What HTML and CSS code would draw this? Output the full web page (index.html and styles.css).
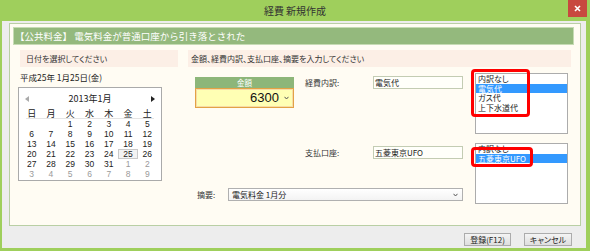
FILE: index.html
```html
<!DOCTYPE html>
<html lang="ja">
<head>
<meta charset="utf-8">
<title>経費 新規作成</title>
<link rel="stylesheet" href="styles.css">
</head>
<body>
<div class="window">
  <div class="titlebar">
    <span></span>
    <span class="title">経費 新規作成</span>
    <span class="close"><svg width="7" height="7" viewBox="0 0 7 7"><path d="M1 1L6 6M6 1L1 6" stroke="#fff" stroke-width="1.6"/></svg></span>
  </div>
  <div class="client">
    <div class="panel">
      <div class="band">【公共料金】 電気料金が普通口座から引き落とされた</div>
      <div class="cols">
        <div class="lcol">
          <div class="sechead">日付を選択してください</div>
          <div class="datelabel">平成25年 1月25日(金)</div>
          <div class="cal">
            <div class="calhead">
              <svg class="arr" width="4" height="6" viewBox="0 0 4 6"><path d="M4 0L0 3L4 6Z" fill="#aaa"/></svg>
              <span>2013年1月</span>
              <svg class="arr" width="4" height="6" viewBox="0 0 4 6"><path d="M0 0L4 3L0 6Z" fill="#222"/></svg>
            </div>
            <div class="dow"><span>日</span><span>月</span><span>火</span><span>水</span><span>木</span><span>金</span><span>土</span></div>
            <div class="days">
              <span></span><span></span><span>1</span><span>2</span><span>3</span><span>4</span><span>5</span>
              <span>6</span><span>7</span><span>8</span><span>9</span><span>10</span><span>11</span><span>12</span>
              <span>13</span><span>14</span><span>15</span><span>16</span><span>17</span><span>18</span><span>19</span>
              <span>20</span><span>21</span><span>22</span><span>23</span><span>24</span><span class="today">25</span><span>26</span>
              <span>27</span><span>28</span><span>29</span><span>30</span><span>31</span><span class="other">1</span><span class="other">2</span>
              <span class="other">3</span><span class="other">4</span><span class="other">5</span><span class="other">6</span><span class="other">7</span><span class="other">8</span><span class="other">9</span>
            </div>
          </div>
        </div>
        <div class="rcol">
          <div class="sechead">金額、経費内訳、支払口座、摘要を入力してください</div>
          <div class="rbody">
            <div class="amount">
              <div class="amthead">金額</div>
              <div class="amtinput"><span class="amtval">6300</span><svg width="5" height="4" viewBox="0 0 5 4"><path d="M0.5 0.8L2.5 3L4.5 0.8" fill="none" stroke="#555" stroke-width="1"/></svg></div>
            </div>
            <div class="label l1">経費内訳:</div>
            <div class="field f1">電気代</div>
            <div class="listbox lb1">
              <div class="item">内訳なし</div>
              <div class="item sel">電気代</div>
              <div class="item">ガス代</div>
              <div class="item">上下水道代</div>
              <div class="hl hl1"></div>
            </div>
            <div class="label l2">支払口座:</div>
            <div class="field f2">五菱東京UFO</div>
            <div class="memo">
              <span class="memolabel">摘要:</span>
              <div class="select"><span>電気料金 1月分</span><svg width="5" height="4" viewBox="0 0 5 4"><path d="M0.5 0.8L2.5 3L4.5 0.8" fill="none" stroke="#555" stroke-width="1"/></svg></div>
            </div>
            <div class="listbox lb2">
              <div class="item">内訳なし</div>
              <div class="item sel">五菱東京UFO</div>
              <div class="hl hl2"></div>
            </div>
          </div>
        </div>
      </div>
    </div>
    <div class="footer">
      <button class="btn b1">登録(F12)</button>
      <button class="btn b2">キャンセル</button>
    </div>
  </div>
</div>
</body>
</html>
```
FILE: styles.css
```css
* { box-sizing: border-box; }
html, body { margin: 0; padding: 0; }
body {
  width: 590px;
  height: 251px;
  overflow: hidden;
  background: #9fcf5c;
  font-family: "Noto Sans CJK JP", "Liberation Sans", sans-serif;
  font-size: 8px;
  font-feature-settings: "palt";
  color: #222;
}
.window { display: flex; flex-direction: column; height: 251px; }
.titlebar {
  height: 21px;
  display: grid;
  grid-template-columns: 1fr auto 1fr;
  align-items: start;
}
.title { font-size: 10px; line-height: 21px; color: #333; }
.close {
  justify-self: end;
  margin-right: 3px;
  width: 19px;
  height: 17px;
  background: #c8483f;
  display: flex;
  align-items: center;
  justify-content: center;
}
.client {
  flex: 1;
  margin: 0 4px 3px 2px;
  background: #ededed;
  padding: 2px 5px 0 7px;
  display: flex;
  flex-direction: column;
}
.panel {
  height: 203px;
  border: 1px solid #b9cfa4;
  background: #fffcf3;
}
.band {
  margin: 3px 6px 0 3px;
  height: 18px;
  background: #94b97d;
  border: 1px solid #c6dbb4;
  color: #fff;
  font-size: 9.5px;
  font-feature-settings: normal;
  line-height: 16px;
  padding-left: 1px;
}
.cols { display: flex; gap: 10px; margin-top: 5px; padding-left: 10px; }
.lcol { width: 158px; }
.rcol { width: 383px; }
.sechead {
  height: 17px;
  background: #fcefe6;
  line-height: 17px;
  padding-left: 6px;
  color: #333;
}
.rcol .sechead { padding-left: 3px; }
.datelabel { margin-top: 5px; height: 10px; line-height: 10px; font-size: 8.5px; }
.cal {
  margin: 5px 0 0 -2px;
  width: 144px;
  height: 94px;
  border: 1px solid #aaaaaa;
  background: #fff;
  font-size: 9px;
}
.calhead {
  height: 21px;
  display: flex;
  align-items: center;
  justify-content: space-between;
  padding: 0 6px 0 6px;
  line-height: 10px;
}
.dow, .days {
  margin: 0 4px 0 3px;
  display: grid;
  grid-template-columns: repeat(7, 1fr);
  text-align: center;
}
.dow {
  height: 10px;
  line-height: 10px;
  background: linear-gradient(#e4e4e4, #e4e4e4) no-repeat center bottom / 128px 1px;
}
.days { font-family: "Liberation Sans", sans-serif; font-size: 8.5px; }
.days span { height: 10px; line-height: 10px; }
.days .other { color: #9a9a9a; }
.days .today { box-shadow: inset 0 0 0 1px #c9c9c9; background: #f3f3f3; }
.rbody {
  display: grid;
  grid-template-columns: 110px 68px 90px 12px 93px;
  grid-template-rows: 65px 9px 61px;
  padding-left: 7px;
  margin-top: 2px;
}
.amount { grid-column: 1; grid-row: 1; margin-top: 8px; width: 99px; }
.amthead {
  height: 11px;
  background: #8db679;
  color: #fff;
  text-align: center;
  font-size: 7.5px;
  line-height: 11px;
}
.amtinput {
  height: 20px;
  border: 1px solid #e3a245;
  box-shadow: inset 0 0 0 1px #f6dca6;
  background: #ffffb4;
  display: flex;
  align-items: center;
  justify-content: flex-end;
  gap: 5px;
  padding-right: 4px;
}
.amtval { font-family: "Liberation Sans", sans-serif; font-size: 13px; line-height: 16px; color: #111; }
.label { line-height: 13px; height: 13px; color: #333; }
.l1 { grid-column: 2; grid-row: 1; margin-top: 7px; }
.l2 { grid-column: 2; grid-row: 3; margin-top: 3px; }
.field {
  grid-column: 3;
  height: 13px;
  border: 1px solid #c3ccb3;
  background: #fffffa;
  line-height: 11px;
  padding-left: 1px;
}
.f1 { grid-row: 1; margin-top: 7px; }
.f2 { grid-row: 3; margin-top: 3px; }
.memo {
  grid-column: 1 / 4;
  grid-row: 3;
  align-self: end;
  margin-bottom: 3px;
  display: flex;
  align-items: center;
}
.memolabel { width: 33px; padding-left: 2px; color: #333; }
.select {
  width: 235px;
  height: 13px;
  border: 1px solid #b0b0b0;
  background: linear-gradient(#ffffff, #f3f3f3);
  display: flex;
  align-items: center;
  justify-content: space-between;
  padding: 0 4px 0 3px;
  line-height: 11px;
}
.listbox {
  grid-column: 5;
  height: 61px;
  border: 1px solid #acacac;
  background: #fff;
  position: relative;
}
.lb1 { grid-row: 1; margin-top: 4px; }
.lb2 { grid-row: 3; }
.item { height: 9.5px; line-height: 9.5px; padding-left: 2px; white-space: nowrap; }
.item.sel { background: #3399ff; color: #fff; }
.hl {
  position: absolute;
  border: 3px solid #ff0000;
  border-radius: 4px;
}
.hl1 { left: -5px; top: -5px; width: 59px; height: 48px; }
.hl2 { left: -5px; top: 3px; width: 62px; height: 20px; }
.footer {
  display: flex;
  justify-content: flex-end;
  gap: 13px;
  padding-right: 9px;
  margin-top: 7px;
}
.btn {
  height: 13px;
  padding: 0;
  border: 1px solid #acacac;
  background: linear-gradient(#f4f4f4, #dedede);
  font-family: "Noto Sans CJK JP", sans-serif;
  font-feature-settings: "palt";
  font-size: 8px;
  line-height: 11px;
  color: #222;
}
.b1 { width: 47px; }
.b2 { width: 48px; }
```
